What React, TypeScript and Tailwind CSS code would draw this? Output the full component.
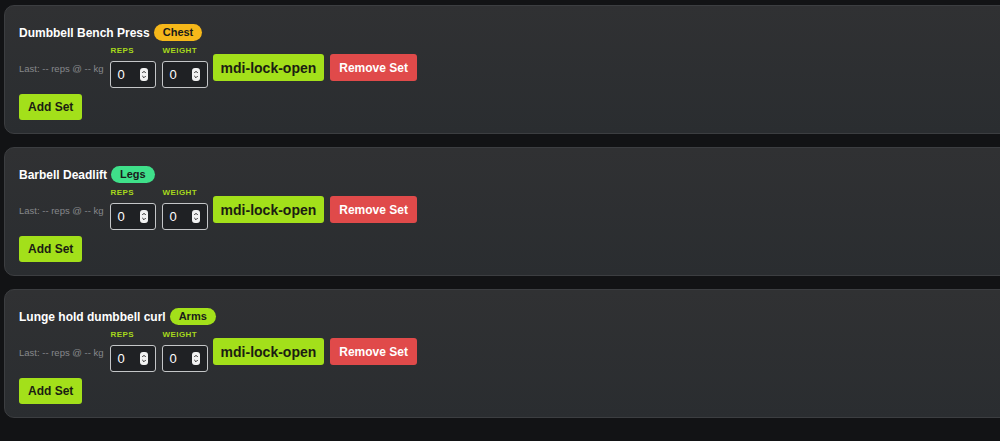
import React from 'react';

type Exercise = {
  name: string;
  tag: string;
  tagClass: string;
};

const exercises: Exercise[] = [
  { name: 'Dumbbell Bench Press', tag: 'Chest', tagClass: 'bg-[#f6b81a]' },
  { name: 'Barbell Deadlift', tag: 'Legs', tagClass: 'bg-[#3fe08a]' },
  { name: 'Lunge hold dumbbell curl', tag: 'Arms', tagClass: 'bg-[#a3e01a]' },
];

const Spinner = () => (
  <svg width="8" height="13" viewBox="0 0 8 13" className="shrink-0">
    <rect x="0" y="0" width="8" height="13" rx="3" fill="#f2f2f2" />
    <path d="M2.3 5 L4 3.3 L5.7 5" stroke="#222" strokeWidth="1" fill="none" />
    <path d="M2.3 8 L4 9.7 L5.7 8" stroke="#222" strokeWidth="1" fill="none" />
  </svg>
);

const NumberField = ({ label }: { label: string }) => (
  <div className="flex flex-col">
    <span className="text-[8px] font-bold tracking-[0.4px] text-[#a6d81c] leading-none pl-[1px] mb-[6px]">
      {label}
    </span>
    <div className="w-[46px] h-[27px] border border-[#c4c6c8] rounded-[3px] bg-[#1f2124] flex items-center justify-between pl-[7px] pr-[7px]">
      <span className="text-[13px] font-medium text-white leading-none">0</span>
      <Spinner />
    </div>
  </div>
);

const ExerciseCard = ({ ex }: { ex: Exercise }) => (
  <div className="w-[1010px] h-[129px] rounded-[10px] border border-[#3c3e41] bg-gradient-to-b from-[#303133] to-[#2a2d30] pl-[14px] pt-[18px] flex flex-col gap-[6px]">
    <div className="flex items-center gap-[4px] h-[17px]">
      <span className="text-[12px] font-bold text-white leading-none">{ex.name}</span>
      <span
        className={`${ex.tagClass} h-[17px] px-[9px] rounded-full text-[11px] font-bold text-[#1a1a1a] flex items-center leading-none`}
      >
        {ex.tag}
      </span>
    </div>
    <div className="flex items-center gap-[6px]">
      <span className="text-[9.5px] text-[#86888b] mt-[3px]">Last: -- reps @ -- kg</span>
      <NumberField label="REPS" />
      <NumberField label="WEIGHT" />
      <button className="h-[27px] px-[8px] rounded-[3px] bg-[#a3e01a] text-[14px] font-bold text-[#1b1d12] leading-none ml-[-1px]">
        mdi-lock-open
      </button>
      <button className="h-[27px] px-[9px] rounded-[3px] bg-[#e04a4a] text-[12px] font-bold text-white leading-none">
        Remove Set
      </button>
    </div>
    <div>
      <button className="h-[26px] px-[9px] rounded-[3px] bg-[#a3e01a] text-[12px] font-bold text-[#1b1d12] leading-none">
        Add Set
      </button>
    </div>
  </div>
);

export default function App() {
  return (
    <div
      className="w-[1000px] h-[441px] overflow-hidden bg-[#121315] pl-[4px] pt-[5px] flex flex-col gap-[13px]"
      style={{ fontFamily: '"Liberation Sans", Arial, sans-serif' }}
    >
      {exercises.map((ex) => (
        <ExerciseCard key={ex.name} ex={ex} />
      ))}
    </div>
  );
}
